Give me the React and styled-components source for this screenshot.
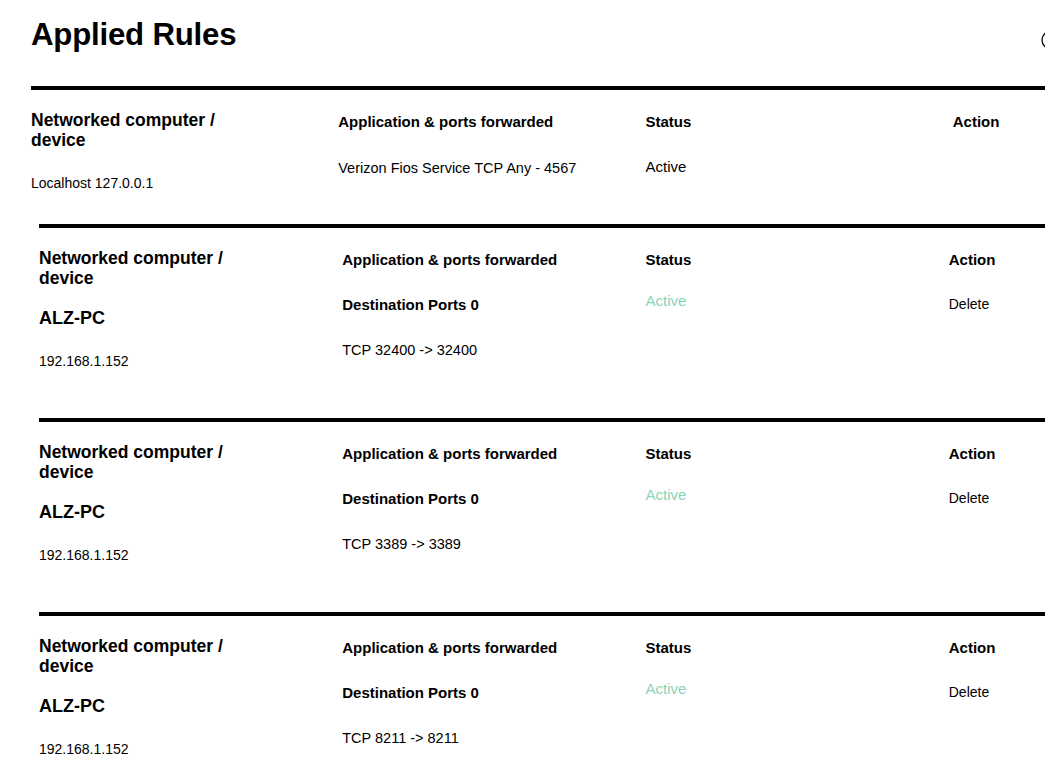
import React from "react";
import styled, { createGlobalStyle } from "styled-components";

const GlobalStyle = createGlobalStyle`
  body {
    margin: 0;
    overflow-x: hidden;
    background: #fff;
    color: #000;
    font-family: "Liberation Sans", Arial, sans-serif;
  }
`;

const Page = styled.div`
  padding-left: 31px;
  width: 1229px;
`;

const TitleBar = styled.div`
  display: flex;
  align-items: flex-start;
  width: 1030px;
  margin-top: 17px;
  margin-bottom: 33px;
`;

const Title = styled.h1`
  margin: 0;
  font-size: 31.2px;
  line-height: 36px;
  font-weight: 700;
  letter-spacing: -0.2px;
`;

const InfoButton = styled.button`
  margin-left: auto;
  margin-top: 13px;
  width: 20px;
  height: 20px;
  padding: 0;
  border: none;
  background: none;
  display: flex;
`;

const Rule = styled.div`
  display: grid;
  grid-template-columns: repeat(4, 1fr);
  border-top: 4px solid #000;
  padding-top: 20px;
  padding-bottom: ${(p) => p.$bottom}px;
`;

const RuleList = styled.div`
  margin: 0 8px;
`;

const Cell = styled.div`
  display: flex;
  flex-direction: column;
  align-items: flex-start;
`;

const DeviceLabel = styled.div`
  font-size: 17.5px;
  line-height: 20px;
  font-weight: 700;
  width: 200px;
`;

const ColLabel = styled.div`
  font-size: 15px;
  line-height: 20px;
  font-weight: 700;
  margin-top: 2px;
`;

const DeviceName = styled.div`
  font-size: 18px;
  line-height: 24px;
  font-weight: 700;
  margin-top: 18px;
`;

const Value = styled.div`
  font-size: ${(p) => p.$size || 14}px;
  line-height: 20px;
  margin-top: ${(p) => p.$gap}px;
  color: ${(p) => p.$color || "#000"};
  white-space: nowrap;
`;

const Ports = styled.div`
  font-size: 15px;
  line-height: 20px;
  font-weight: 700;
  margin-top: 25px;
`;

const ActionLink = styled.a`
  font-size: 14px;
  line-height: 20px;
  margin-top: 24px;
  color: #000;
  cursor: pointer;
`;

const rules = [
  { name: "ALZ-PC", ip: "192.168.1.152", ports: "TCP 32400 -> 32400" },
  { name: "ALZ-PC", ip: "192.168.1.152", ports: "TCP 3389 -> 3389" },
  { name: "ALZ-PC", ip: "192.168.1.152", ports: "TCP 8211 -> 8211" },
];

export default function App() {
  return (
    <>
      <GlobalStyle />
      <Page>
        <TitleBar>
          <Title>Applied Rules</Title>
          <InfoButton aria-label="Info">
            <svg width="20" height="20" viewBox="0 0 20 20">
              <circle cx="10" cy="10" r="9" fill="none" stroke="#000" strokeWidth="1.3" />
            </svg>
          </InfoButton>
        </TitleBar>

        <Rule $bottom={31}>
          <Cell>
            <DeviceLabel>Networked computer / device</DeviceLabel>
            <Value $gap={23}>Localhost 127.0.0.1</Value>
          </Cell>
          <Cell>
            <ColLabel>Application &amp; ports forwarded</ColLabel>
            <Value $gap={26} $size={14.5}>Verizon Fios Service TCP Any - 4567</Value>
          </Cell>
          <Cell>
            <ColLabel>Status</ColLabel>
            <Value $gap={25} $size={15}>Active</Value>
          </Cell>
          <Cell>
            <ColLabel>Action</ColLabel>
          </Cell>
        </Rule>

        <RuleList>
          {rules.map((r, i) => (
            <Rule key={i} $bottom={47}>
              <Cell>
                <DeviceLabel>Networked computer / device</DeviceLabel>
                <DeviceName>{r.name}</DeviceName>
                <Value $gap={21}>{r.ip}</Value>
              </Cell>
              <Cell>
                <ColLabel>Application &amp; ports forwarded</ColLabel>
                <Ports>Destination Ports 0</Ports>
                <Value $gap={25} $size={14.5}>{r.ports}</Value>
              </Cell>
              <Cell>
                <ColLabel>Status</ColLabel>
                <Value $gap={21} $size={15} $color="#88d4b8">Active</Value>
              </Cell>
              <Cell>
                <ColLabel>Action</ColLabel>
                <ActionLink>Delete</ActionLink>
              </Cell>
            </Rule>
          ))}
        </RuleList>
      </Page>
    </>
  );
}
